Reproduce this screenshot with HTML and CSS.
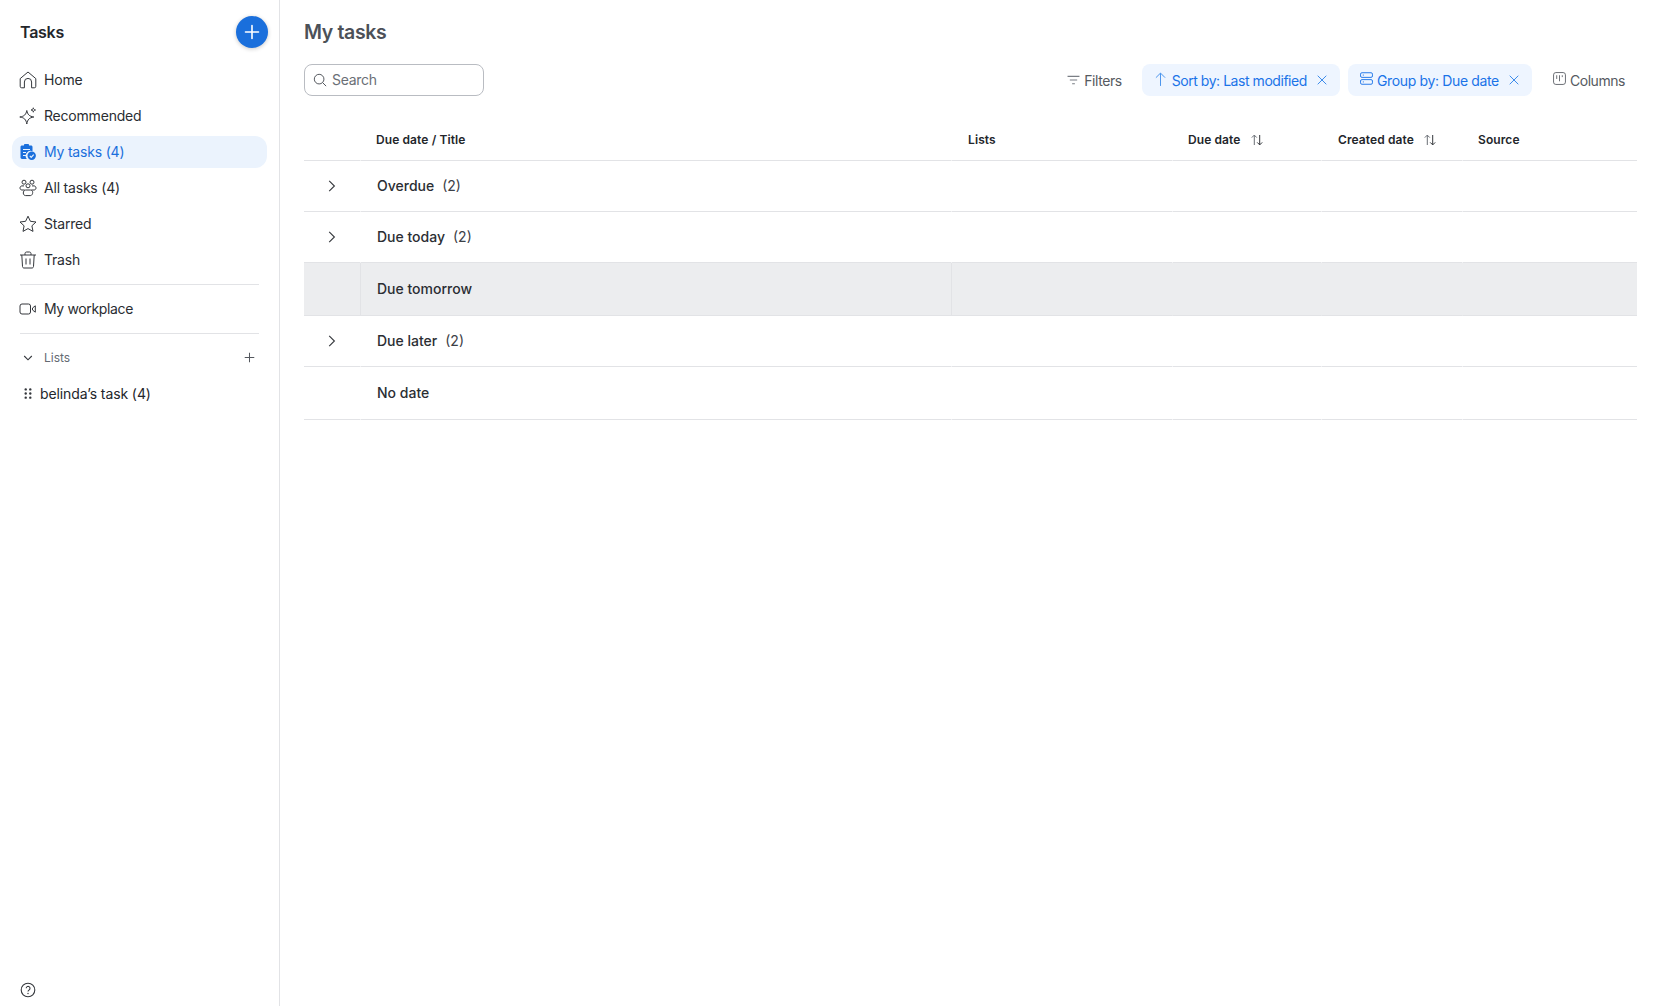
FILE: index.html
```html
<!DOCTYPE html>
<html lang="en">
<head>
<meta charset="utf-8">
<title>My tasks</title>
<link rel="stylesheet" href="styles.css">
</head>
<body>
<div class="app">
  <aside class="sidebar">
    <div class="side-head">
      <span class="side-title">Tasks</span>
      <button class="fab"><svg width="16" height="16" viewBox="0 0 16 16"><path d="M8 1.500v13M1.500 8h13" stroke="#fff" stroke-width="1.6" fill="none" stroke-linecap="round"/></svg></button>
    </div>
    <nav class="nav">
      <a class="nav-item"><svg class="ico" viewBox="0 0 18 18"><path d="M1.200 7.600 9 1l7.800 6.600v7.700a1.500 1.500 0 0 1-1.500 1.500h-2.700V11a3.600 3.600 0 0 0-7.200 0v5.800H2.700a1.500 1.500 0 0 1-1.500-1.500z"/></svg>Home</a>
      <a class="nav-item"><svg class="ico" viewBox="0 0 18 18"><path d="M7.800 3.500c.8 4 2.400 5.800 7 6.500-4.600.7-6.200 2.500-7 7-.8-4.500-2.400-6.300-7-7 4.600-.7 6.200-2.500 7-6.500z"/><path d="M14.300 .8c.2 1.300.8 1.900 2.200 2.200-1.400.2-2 .8-2.200 2.200-.2-1.400-.8-2-2.200-2.200 1.400-.3 2-.9 2.200-2.200z"/></svg>Recommended</a>
      <a class="nav-item active"><svg class="ico" viewBox="0 0 18 18"><path class="solid" d="M3 2.500h2V1.800C5 1.300 5.400 1 5.800 1h3.400c.4 0 .8.300.8.800v.7h2c.8 0 1.500.6 1.500 1.400v4.300a5 5 0 0 0-5.700 7.800H3c-.8 0-1.500-.6-1.500-1.400V3.900c0-.8.700-1.400 1.500-1.400z"/><path class="cut" d="M4 6.500h7M4 9.500h3M4 12.500h3"/><circle class="solid" cx="12.700" cy="12.800" r="4.200"/><path class="cut" d="m10.800 12.900 1.400 1.400 2.500-2.600"/></svg>My tasks (4)</a>
      <a class="nav-item"><svg class="ico" viewBox="0 0 18 18"><circle cx="5" cy="3.200" r="2"/><circle cx="13" cy="3.200" r="2"/><circle cx="9" cy="6.800" r="2"/><path d="M5 6.900H3C1.800 6.900 1 7.900 1 9s.8 2 2 2h2.600M13 6.900h2c1.200 0 2 1 2 2.100s-.8 2-2 2h-2.600"/><path d="M6.600 11h4.800c1.400 0 2.300 1.100 2.300 2.500S12.800 16.600 11.400 16.600H6.600c-1.400 0-2.300-1.200-2.300-2.600S5.200 11 6.600 11z"/></svg>All tasks (4)</a>
      <a class="nav-item"><svg class="ico" viewBox="0 0 18 18"><path d="m9 1.200 2.400 5.100 5.600.7-4.100 3.800 1.100 5.600L9 13.600l-5 2.800 1.100-5.600L1 7l5.600-.7z"/></svg>Starred</a>
      <a class="nav-item"><svg class="ico" viewBox="0 0 18 18"><path d="M1 4h16M6 4V2.500C6 1.700 6.700 1 7.500 1h3c.8 0 1.500.7 1.500 1.500V4M2.800 4l.7 11.500c0 .9.700 1.500 1.500 1.500h8c.8 0 1.500-.6 1.500-1.500L15.200 4M7 7.500v6M11 7.500v6"/></svg>Trash</a>
    </nav>
    <div class="rule"></div>
    <a class="nav-item nav-tight"><svg class="ico" viewBox="0 0 18 18"><rect x="1" y="4" width="10.500" height="10" rx="2"/><path d="m13.500 8 2.800-2.200v6.400L13.500 10z"/></svg>My workplace</a>
    <div class="rule"></div>
    <div class="lists-head">
      <span class="lists-label"><svg class="small" viewBox="0 0 10 10"><path d="m1.200 3 3.800 3.800L8.800 3"/></svg>Lists</span>
      <svg class="add" viewBox="0 0 12 12"><path d="M6 .8v10.400M.8 6h10.400"/></svg>
    </div>
    <a class="list-item"><svg class="grip" viewBox="0 0 8 12"><circle cx="1.500" cy="1.500" r="1.300"/><circle cx="6.500" cy="1.500" r="1.300"/><circle cx="1.500" cy="6" r="1.300"/><circle cx="6.500" cy="6" r="1.300"/><circle cx="1.500" cy="10.500" r="1.300"/><circle cx="6.500" cy="10.500" r="1.300"/></svg>belinda’s task (4)</a>
    <div class="side-foot"><svg class="help" viewBox="0 0 16 16"><circle cx="8" cy="8" r="6.800"/><path d="M6.200 6.300a1.900 1.900 0 1 1 2.900 1.600c-.7.400-1.100.8-1.100 1.500"/><circle class="dot" cx="8" cy="11.500" r=".7"/></svg></div>
  </aside>
  <main class="main">
    <h1 class="title">My tasks</h1>
    <div class="toolbar">
      <label class="search"><svg class="search-ico" viewBox="0 0 16 16"><circle cx="7" cy="7" r="5.500"/><path d="m11 11 4 4"/></svg><span>Search</span></label>
      <div class="actions">
        <span class="tool tool-filters"><svg class="t-ico" viewBox="0 0 14 12"><path d="M.5 1.500h13M3 5.500h8M5.500 9.500h3"/></svg>Filters</span>
        <span class="chip chip-sort"><svg class="c-ico" viewBox="0 0 12 16"><path d="M6 15V1.200M1 6l5-5 5 5"/></svg>Sort by: Last modified<svg class="c-x" viewBox="0 0 10 10"><path d="m.7.700 8.600 8.600M9.300.700.700 9.300"/></svg></span>
        <span class="chip chip-group"><svg class="g-ico" viewBox="0 0 14 14"><rect x=".6" y=".8" width="12.800" height="5" rx="1.500"/><rect x=".6" y="8.200" width="12.800" height="5" rx="1.500"/><path d="M3 3.300h1.200M3 10.700h1.200"/></svg>Group by: Due date<svg class="c-x" viewBox="0 0 10 10"><path d="m.7.700 8.600 8.600M9.300.700.700 9.300"/></svg></span>
        <span class="tool tool-columns"><svg class="t-col" viewBox="0 0 14 14"><rect x=".6" y=".6" width="12.800" height="12.800" rx="2.500"/><path d="M4 3.500v4M7 3.500v6.500M10 3.500v2"/></svg>Columns</span>
      </div>
    </div>
    <section class="table">
      <div class="row head">
        <div class="cell"></div>
        <div class="cell c-title">Due date / Title</div>
        <div class="cell c-h">Lists</div>
        <div class="cell c-h">Due date<svg class="sort" viewBox="0 0 12 12"><path d="M3.300 11V1.200M.8 3.600l2.500-2.500 2.500 2.500"/><path class="dark" d="M8.700 1v9.800M6.200 8.400l2.500 2.500 2.500-2.500"/></svg></div>
        <div class="cell c-h c-created">Created date<svg class="sort" viewBox="0 0 12 12"><path d="M3.300 11V1.200M.8 3.600l2.500-2.500 2.500 2.500"/><path class="dark" d="M8.700 1v9.800M6.200 8.400l2.500 2.500 2.500-2.500"/></svg></div>
        <div class="cell c-h">Source</div>
      </div>
      <div class="row">
        <div class="cell first"><svg class="chev" viewBox="0 0 8 12"><path d="m1.200.8 5.200 5.200-5.200 5.200"/></svg></div>
        <div class="cell group"><b>Overdue</b><span>(2)</span></div>
        <div class="cell"></div><div class="cell"></div><div class="cell"></div><div class="cell"></div>
      </div>
      <div class="row">
        <div class="cell first"><svg class="chev" viewBox="0 0 8 12"><path d="m1.200.8 5.200 5.200-5.200 5.200"/></svg></div>
        <div class="cell group"><b>Due today</b><span>(2)</span></div>
        <div class="cell"></div><div class="cell"></div><div class="cell"></div><div class="cell"></div>
      </div>
      <div class="row tall shaded">
        <div class="cell first"></div>
        <div class="cell group ruled"><b>Due tomorrow</b></div>
        <div class="cell ruled"></div><div class="cell"></div><div class="cell"></div><div class="cell"></div>
      </div>
      <div class="row">
        <div class="cell first"><svg class="chev" viewBox="0 0 8 12"><path d="m1.200.8 5.200 5.200-5.200 5.200"/></svg></div>
        <div class="cell group"><b>Due later</b><span>(2)</span></div>
        <div class="cell"></div><div class="cell"></div><div class="cell"></div><div class="cell"></div>
      </div>
      <div class="row tall">
        <div class="cell first"></div>
        <div class="cell group"><b>No date</b></div>
        <div class="cell"></div><div class="cell"></div><div class="cell"></div><div class="cell"></div>
      </div>
    </section>
  </main>
</div>
</body>
</html>
```
FILE: styles.css
```css
* { box-sizing: border-box; }
html, body { margin: 0; height: 100%; }
body {
  font-family: Inter, "Liberation Sans", sans-serif;
  font-size: 14px;
  color: #23262b;
  background: #fff;
  overflow: hidden;
}
svg { display: block; flex: none; fill: none; stroke: currentColor; }
.app { display: flex; height: 100vh; }

/* Sidebar */
.sidebar {
  width: 280px;
  flex: none;
  border-right: 1px solid #e2e3e6;
  padding: 16px 12px 8px;
  display: flex;
  flex-direction: column;
}
.side-head {
  height: 32px;
  display: flex;
  align-items: center;
  justify-content: space-between;
  padding-left: 8px;
  margin-bottom: 16px;
}
.side-title { font-size: 16px; font-weight: 600; letter-spacing: -.25px; }
.fab {
  width: 32px;
  height: 32px;
  margin-right: -1px;
  border: 0;
  border-radius: 50%;
  background: #1a6fdc;
  padding: 0;
  display: flex;
  align-items: center;
  justify-content: center;
  box-shadow: 0 1px 4px rgba(0, 0, 0, .22);
}
.nav { display: flex; flex-direction: column; gap: 4px; }
.nav-item {
  height: 32px;
  display: flex;
  align-items: center;
  gap: 7px;
  padding: 0 0 1px 7px;
  border-radius: 12px;
  color: #2a2d32;
  width: 255px;
  letter-spacing: -.2px;
}
.nav-tight { letter-spacing: -.35px; }
.ico { width: 18px; height: 18px; stroke-width: 1; color: #34373c; }
.active { background: #ebf3fd; color: #1a6fdc; }
.active .ico { color: #1a6fdc; }
.solid { fill: #1a6fdc; stroke: none; }
.cut { stroke: #ebf3fd; stroke-width: 1.2; }
.rule { height: 1px; background: #e2e3e6; margin: 8px; width: 239px; }
.lists-head {
  height: 32px;
  display: flex;
  align-items: center;
  justify-content: space-between;
  padding: 0 12px 1px 11px;
  font-size: 12px;
  color: #656a72;
  width: 255px;
}
.lists-label { display: flex; align-items: center; gap: 11px; }
.small { width: 10px; height: 10px; stroke-width: 1.1; color: #34373c; }
.add { width: 11px; height: 11px; stroke-width: 1.1; color: #54585e; }
.list-item {
  height: 32px;
  margin-top: 4px;
  display: flex;
  align-items: center;
  gap: 8px;
  padding: 0 0 1px 12px;
  letter-spacing: -.1px;
}
.grip { width: 8px; height: 11px; fill: #34373c; stroke: none; }
.side-foot { margin-top: auto; padding-left: 8px; height: 16px; }
.help { width: 16px; height: 16px; stroke-width: 1.1; color: #34373c; }
.dot { fill: #34373c; stroke: none; }

/* Main */
.main { flex: 1; min-width: 0; padding: 16px 32px 0 24px; }
.title {
  margin: 0 0 16px;
  height: 32px;
  line-height: 32px;
  font-size: 19.5px;
  font-weight: 600;
  letter-spacing: -.35px;
  color: #4c5158;
}
.toolbar { display: flex; align-items: center; justify-content: space-between; height: 32px; }
.search {
  width: 180px;
  height: 32px;
  border: 1px solid #b9bcc2;
  border-radius: 8px;
  display: flex;
  align-items: center;
  gap: 5px;
  padding: 0 0 1px 8px;
  color: #6a6f76;
  letter-spacing: -.3px;
}
.search-ico { width: 14px; height: 14px; stroke-width: 1.1; color: #4d5157; }
.actions { display: flex; align-items: center; margin-right: 12px; letter-spacing: -.35px; }
.tool { display: flex; align-items: center; color: #565a61; letter-spacing: -.45px; }
.tool-filters { gap: 4px; margin-right: 20px; }
.tool-columns { gap: 4px; margin-left: 21px; }
.t-ico { width: 13px; height: 11px; stroke-width: 1.1; color: #7a7e85; }
.t-col { width: 13px; height: 13px; stroke-width: 1; color: #62666c; margin-top: -3px; }
.chip {
  height: 32px;
  display: flex;
  align-items: center;
  padding: 0 13px;
  border-radius: 8px;
  background: #eef5ff;
  color: #1a73e8;
}
.chip-sort { letter-spacing: -.45px; }
.chip-group { margin-left: 8px; padding-left: 12px; }
.c-ico { width: 11px; height: 15px; stroke-width: 1; margin-right: 6px; margin-top: -2px; color: #3d8ceb; }
.g-ico { width: 13px; height: 13px; stroke-width: 1; margin-right: 4px; margin-top: -3px; }
.c-x { width: 10px; height: 10px; stroke-width: 1; margin-left: 10px; color: #3d8ceb; }

/* Table */
.table { margin-top: 16px; }
.row {
  display: grid;
  grid-template-columns: 56px 591px 221px 149px 141px 175px;
  height: 51px;
}
.row.tall { height: 53px; }
.row.head { height: 49px; font-size: 12px; font-weight: 600; color: #23262b; letter-spacing: .1px; }
.cell {
  display: flex;
  align-items: center;
  border-bottom: 1px solid #e2e3e6;
  border-left: 1px solid #fff;
}
.cell:first-child { border-left: 0; }
.head .cell { border-left-color: transparent; padding-top: 7px; }
.head .c-title { padding-left: 15px; }
.head .c-h { padding-left: 15px; }
.head .c-h:nth-child(3) { padding-left: 16px; }
.head .c-created { padding-left: 16px; }
.sort { width: 12px; height: 12px; margin-left: 10px; stroke-width: 1; color: #6a6e75; }
.dark { color: #34373c; }
.first { justify-content: center; }
.chev { width: 8px; height: 12px; stroke-width: 1.1; color: #34373c; }
.group { padding: 0 0 1px 16px; gap: 8px; font-size: 14px; }
.group b { font-weight: 500; color: #2b2e33; }
.group span { color: #3c4046; }
.shaded { background: #ecedef; }
.shaded .cell { border-left-color: transparent; }
.shaded .ruled { border-left-color: #e2e3e6; }
```
